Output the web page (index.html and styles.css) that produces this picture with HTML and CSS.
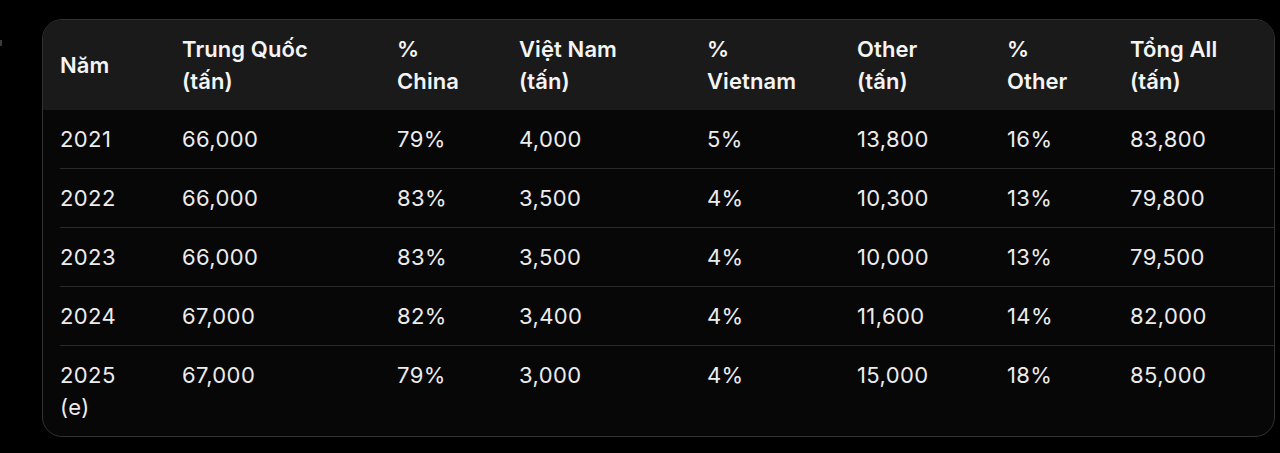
FILE: index.html
```html
<!DOCTYPE html>
<html lang="vi">
<head>
<meta charset="utf-8">
<title>Bảng sản lượng</title>
<link rel="stylesheet" href="styles.css">
</head>
<body>
<div class="page">
  <div class="edge-mark"></div>
  <div class="card">
    <div class="row head">
      <div class="cell">Năm</div>
      <div class="cell">Trung Quốc<br>(tấn)</div>
      <div class="cell">%<br>China</div>
      <div class="cell">Việt Nam<br>(tấn)</div>
      <div class="cell">%<br>Vietnam</div>
      <div class="cell">Other<br>(tấn)</div>
      <div class="cell">%<br>Other</div>
      <div class="cell">Tổng All<br>(tấn)</div>
    </div>
    <div class="row sep">
      <div class="cell">2021</div><div class="cell">66,000</div><div class="cell">79%</div><div class="cell">4,000</div><div class="cell">5%</div><div class="cell">13,800</div><div class="cell">16%</div><div class="cell">83,800</div>
    </div>
    <div class="row sep">
      <div class="cell">2022</div><div class="cell">66,000</div><div class="cell">83%</div><div class="cell">3,500</div><div class="cell">4%</div><div class="cell">10,300</div><div class="cell">13%</div><div class="cell">79,800</div>
    </div>
    <div class="row sep">
      <div class="cell">2023</div><div class="cell">66,000</div><div class="cell">83%</div><div class="cell">3,500</div><div class="cell">4%</div><div class="cell">10,000</div><div class="cell">13%</div><div class="cell">79,500</div>
    </div>
    <div class="row sep">
      <div class="cell">2024</div><div class="cell">67,000</div><div class="cell">82%</div><div class="cell">3,400</div><div class="cell">4%</div><div class="cell">11,600</div><div class="cell">14%</div><div class="cell">82,000</div>
    </div>
    <div class="row">
      <div class="cell">2025<br>(e)</div><div class="cell">67,000</div><div class="cell">79%</div><div class="cell">3,000</div><div class="cell">4%</div><div class="cell">15,000</div><div class="cell">18%</div><div class="cell">85,000</div>
    </div>
  </div>
</div>
</body>
</html>
```
FILE: styles.css
```css
html, body {
  margin: 0;
  padding: 0;
  background: #000;
}
body {
  font-family: Inter, "Noto Sans", "DejaVu Sans", sans-serif;
  color: #ececec;
  height: 453px;
  overflow: hidden;
}
.page {
  display: flex;
  align-items: flex-start;
  padding-top: 19px;
}
.edge-mark {
  width: 2px;
  height: 6px;
  margin-top: 21px;
  margin-right: 40px;
  background: #3a3a3a;
  flex: none;
}
.card {
  flex: none;
  width: 1231px;
  border: 1px solid #323232;
  border-radius: 20px;
  overflow: hidden;
  background: #070707;
}
.row {
  display: grid;
  grid-template-columns: 122px 215px 122px 188px 150px 150px 123px 161px;
  font-size: 22px;
  line-height: 32px;
  letter-spacing: 0.4px;
}
.row.sep {
  padding-bottom: 1px;
  background: linear-gradient(#2a2a2a, #2a2a2a) no-repeat 17px 100% / calc(100% - 17px) 1px;
}
.cell {
  padding: 13px 0 13px 17px;
  white-space: nowrap;
}
.head {
  background: #1a1a1a;
  align-items: center;
  font-weight: 600;
  color: #f4f4f4;
  letter-spacing: 0.1px;
}
```
